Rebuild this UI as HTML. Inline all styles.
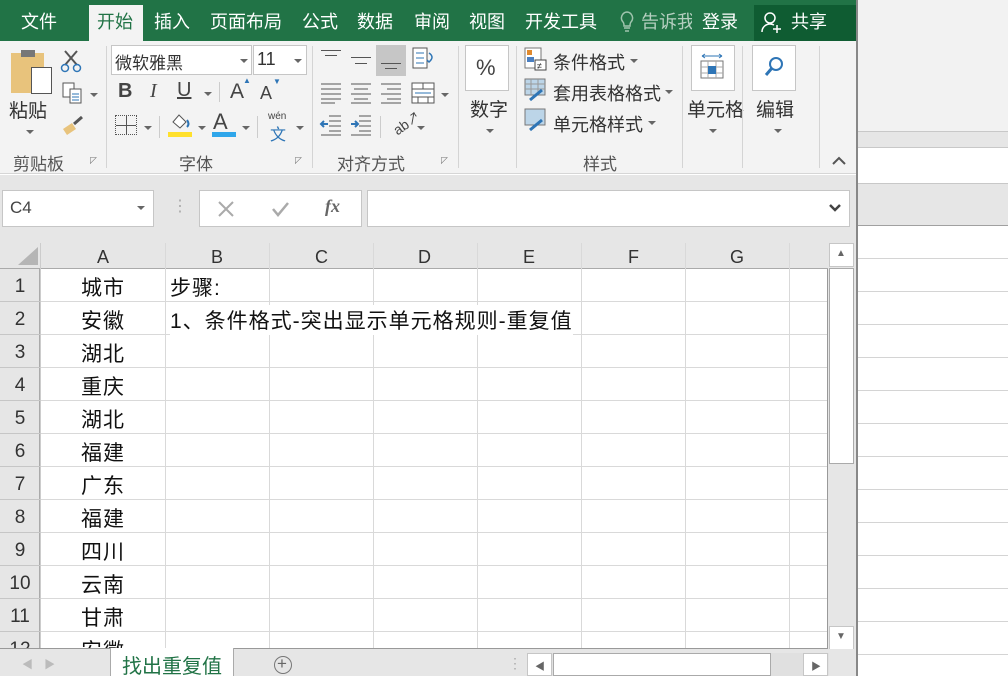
<!DOCTYPE html>
<html><head><meta charset="utf-8"><style>
*{margin:0;padding:0;box-sizing:border-box}
body{width:1008px;height:676px;overflow:hidden;position:relative;background:#fff;font-family:"Liberation Sans","Noto Sans CJK SC",sans-serif;color:#222}
.a{position:absolute}
.t{position:absolute;white-space:nowrap}
.tab{position:absolute;top:8px;font-size:18px;color:#fff}
.rb{font-size:18px;color:#333}
.gl{position:absolute;font-size:17px;color:#555}
.sep{position:absolute;width:1px;background:#d4d4d4}
.dd{position:absolute;width:0;height:0;border-left:4px solid transparent;border-right:4px solid transparent;border-top:4px solid #666}
.hl{position:absolute;height:1px;background:#555}
.cell{position:absolute;font-size:21px;color:#111;letter-spacing:1px}
.rn{position:absolute;left:0;width:40px;text-align:center;font-size:19px;color:#333}
</style></head><body>
<!-- right background window -->
<div class="a" style="left:857px;top:0;width:151px;height:131px;background:#f2f2f2"></div>
<div class="a" style="left:857px;top:131px;width:151px;height:16px;background:#e6e6e6;border-top:1px solid #c8c8c8"></div>
<div class="a" style="left:857px;top:147px;width:151px;height:36px;background:#fff;border-top:1px solid #c8c8c8"></div>
<div class="a" style="left:857px;top:183px;width:151px;height:43px;background:#e6e6e6;border-top:1px solid #c8c8c8;border-bottom:1px solid #a0a0a0"></div>
<div class="a" style="left:857px;top:226px;width:151px;height:450px;background:repeating-linear-gradient(to bottom,#fff 0,#fff 32px,#d4d4d4 32px,#d4d4d4 33px)"></div>
<div class="a" style="left:856px;top:0;width:2px;height:676px;background:#888"></div>

<!-- title/tab bar -->
<div class="a" style="left:0;top:0;width:856px;height:41px;background:#217346"></div>
<div class="a" style="left:754px;top:5px;width:102px;height:36px;background:#0f5c32"></div>
<div class="a" style="left:89px;top:5px;width:54px;height:36px;background:#f3f3f3"></div>
<div class="tab" style="left:21px">文件</div>
<div class="tab" style="left:97px;color:#217346">开始</div>
<div class="tab" style="left:154px">插入</div>
<div class="tab" style="left:210px">页面布局</div>
<div class="tab" style="left:302px">公式</div>
<div class="tab" style="left:357px">数据</div>
<div class="tab" style="left:414px">审阅</div>
<div class="tab" style="left:469px">视图</div>
<div class="tab" style="left:525px">开发工具</div>
<svg class="a" style="left:619px;top:11px" width="16" height="22"><path d="M8 1a6 6 0 0 0-4 10c1 1 1 3 1 4h6c0-1 0-3 1-4A6 6 0 0 0 8 1zM5 17h6M6 20h4" fill="none" stroke="#9fc4ad" stroke-width="1.5"/></svg>
<div class="tab" style="left:641px;color:#b5cfc0">告诉我</div>
<div class="a" style="left:692px;top:5px;width:5px;height:36px;background:#217346"></div>
<div class="tab" style="left:702px">登录</div>
<svg class="a" style="left:760px;top:10px" width="24" height="24" viewBox="0 0 24 24"><circle cx="10" cy="8" r="5" fill="none" stroke="#fff" stroke-width="1.5"/><path d="M2 22c0-5 4-8 8-8 2 0 3 .5 4 1" fill="none" stroke="#fff" stroke-width="1.5"/><path d="M17 15v8M13 19h8" stroke="#fff" stroke-width="1.5"/></svg>
<div class="tab" style="left:791px">共享</div>

<!-- ribbon -->
<div class="a" style="left:0;top:41px;width:856px;height:133px;background:#f3f3f3;border-bottom:1px solid #d6d6d6"></div>
<!-- clipboard -->
<div class="a" style="left:11px;top:53px;width:33px;height:40px;background:#e8c37c"></div>
<div class="a" style="left:21px;top:50px;width:14px;height:7px;background:#777"></div>
<div class="a" style="left:31px;top:67px;width:21px;height:27px;background:#fff;border:1px solid #555"></div>
<div class="t rb" style="left:9px;top:96px;font-size:19px">粘贴</div>
<div class="dd" style="left:26px;top:130px"></div>
<svg class="a" style="left:60px;top:49px" width="22" height="24"><path d="M5 2l12 14M17 2L5 16" stroke="#555" stroke-width="2"/><circle cx="5" cy="19" r="3.5" fill="none" stroke="#2e75b6" stroke-width="1.5"/><circle cx="17" cy="19" r="3.5" fill="none" stroke="#2e75b6" stroke-width="1.5"/></svg>
<svg class="a" style="left:62px;top:82px" width="22" height="24"><rect x="1" y="1" width="11" height="14" fill="#fff" stroke="#555"/><rect x="8" y="7" width="11" height="14" fill="#fff" stroke="#555"/><path d="M10 12h7M10 15h7M10 18h7" stroke="#2e75b6"/></svg>
<div class="dd" style="left:90px;top:93px"></div>
<svg class="a" style="left:60px;top:115px" width="26" height="22"><path d="M3 14l9-6 4 6-9 6z" fill="#e8c37c"/><path d="M14 9l8-7" stroke="#555" stroke-width="3"/></svg>
<div class="gl" style="left:13px;top:150px">剪贴板</div>
<div class="t" style="left:90px;top:155px;font-size:9px;color:#777">◸</div>
<div class="sep" style="left:106px;top:46px;height:122px"></div>
<!-- font -->
<div class="a" style="left:111px;top:45px;width:141px;height:30px;background:#fff;border:1px solid #c6c6c6"></div>
<div class="t" style="left:115px;top:49px;font-size:17px;color:#333">微软雅黑</div>
<div class="dd" style="left:240px;top:59px"></div>
<div class="a" style="left:253px;top:45px;width:54px;height:30px;background:#fff;border:1px solid #c6c6c6"></div>
<div class="t" style="left:257px;top:49px;font-size:18px;color:#333">11</div>
<div class="dd" style="left:294px;top:59px"></div>
<div class="t" style="left:118px;top:80px;font-size:20px;font-weight:bold;color:#444">B</div>
<div class="t" style="left:150px;top:80px;font-size:20px;font-style:italic;font-family:'Liberation Serif',serif;color:#444">I</div>
<div class="t" style="left:177px;top:79px;font-size:20px;text-decoration:underline;color:#444">U</div>
<div class="dd" style="left:204px;top:92px"></div>
<div class="sep" style="left:219px;top:82px;height:20px;background:#ccc"></div>
<div class="t" style="left:230px;top:80px;font-size:21px;color:#444">A</div>
<div class="t" style="left:243px;top:76px;font-size:8px;color:#2e75b6">▲</div>
<div class="t" style="left:260px;top:83px;font-size:18px;color:#444">A</div>
<div class="t" style="left:273px;top:77px;font-size:8px;color:#2e75b6">▼</div>
<div class="a" style="left:115px;top:115px;width:22px;height:20px;border:1px dotted #555;background:linear-gradient(#555,#555) 10px 0/1px 100% no-repeat,linear-gradient(#555,#555) 0 9px/100% 1px no-repeat"></div>
<div class="dd" style="left:144px;top:126px"></div>
<div class="sep" style="left:159px;top:116px;height:22px;background:#ccc"></div>
<svg class="a" style="left:168px;top:112px" width="24" height="20"><path d="M5 10l6-7 7 7-6 6z" fill="#fff" stroke="#555"/><path d="M19 8q3 4 0 7" fill="none" stroke="#2e75b6" stroke-width="2"/></svg>
<div class="a" style="left:168px;top:132px;width:24px;height:5px;background:#ffe02c"></div>
<div class="dd" style="left:198px;top:126px"></div>
<div class="t" style="left:213px;top:109px;font-size:22px;color:#444">A</div>
<div class="a" style="left:212px;top:132px;width:24px;height:5px;background:#2fa6ea"></div>
<div class="dd" style="left:242px;top:126px"></div>
<div class="sep" style="left:257px;top:116px;height:22px;background:#ccc"></div>
<div class="t" style="left:268px;top:111px;font-size:10px;color:#444">wén</div>
<div class="t" style="left:270px;top:121px;font-size:16px;color:#2e75b6">文</div>
<div class="dd" style="left:296px;top:126px"></div>
<div class="gl" style="left:179px;top:150px">字体</div>
<div class="t" style="left:295px;top:155px;font-size:9px;color:#777">◸</div>
<div class="sep" style="left:312px;top:46px;height:122px"></div>
<!-- alignment -->
<div class="a" style="left:376px;top:45px;width:30px;height:31px;background:#c6c6c6"></div>
<div class="hl" style="left:321px;top:50px;width:20px"></div><div class="hl" style="left:325px;top:55px;width:12px"></div>
<div class="hl" style="left:351px;top:57px;width:20px"></div><div class="hl" style="left:355px;top:63px;width:12px"></div>
<div class="hl" style="left:381px;top:63px;width:20px"></div><div class="hl" style="left:385px;top:68px;width:12px"></div>
<svg class="a" style="left:412px;top:47px" width="24" height="24"><rect x="1" y="1" width="14" height="20" fill="#fff" stroke="#555"/><path d="M4 6h8M4 11h8M4 16h8" stroke="#2e75b6"/><path d="M17 6q6 4 0 9l-2-2" fill="none" stroke="#2e75b6" stroke-width="1.5"/></svg>
<svg class="a" style="left:319px;top:82px" width="130" height="22"><g stroke="#555"><path d="M2 2h20M2 7h20M2 12h20M2 17h20M2 21h14"/><path d="M32 2h20M35 7h14M32 12h20M35 17h14M32 21h20"/><path d="M62 2h20M68 7h14M62 12h20M68 17h14M62 21h20"/></g><rect x="93" y="1" width="22" height="20" fill="#fff" stroke="#555"/><path d="M93 7h22M93 15h22M104 1v6M99 15v6M109 15v6" stroke="#555"/><path d="M96 11h16" stroke="#2e75b6"/></svg>
<div class="dd" style="left:441px;top:93px"></div>
<svg class="a" style="left:319px;top:114px" width="60" height="22"><g stroke="#555"><path d="M10 2h12M10 7h12M10 12h12M10 17h12M2 21h20"/><path d="M40 2h12M40 7h12M40 12h12M40 17h12M32 21h20"/></g><path d="M2 10h7M5 7l-3 3 3 3" stroke="#2e75b6" fill="none" stroke-width="2"/><path d="M32 10h7M36 7l3 3-3 3" stroke="#2e75b6" fill="none" stroke-width="2"/></svg>
<div class="sep" style="left:380px;top:116px;height:22px;background:#ccc"></div>
<div class="t" style="left:392px;top:113px;font-size:14px;color:#444;transform:rotate(-35deg)">ab↗</div>
<div class="dd" style="left:417px;top:126px"></div>
<div class="gl" style="left:337px;top:150px">对齐方式</div>
<div class="t" style="left:441px;top:155px;font-size:9px;color:#777">◸</div>
<div class="sep" style="left:458px;top:46px;height:122px"></div>
<!-- number -->
<div class="a" style="left:465px;top:45px;width:44px;height:46px;background:#fff;border:1px solid #c6c6c6"></div>
<div class="t" style="left:476px;top:55px;font-size:22px;color:#444">%</div>
<div class="t rb" style="left:470px;top:95px;font-size:19px">数字</div>
<div class="dd" style="left:486px;top:129px"></div>
<div class="sep" style="left:516px;top:46px;height:122px"></div>
<!-- styles -->
<svg class="a" style="left:524px;top:47px" width="24" height="24"><rect x="1" y="1" width="16" height="20" fill="#fff" stroke="#777"/><rect x="3" y="3" width="5" height="5" fill="#e08a2e"/><rect x="3" y="10" width="7" height="5" fill="#4a7fc1"/><rect x="11" y="13" width="11" height="10" fill="#fff" stroke="#444"/><text x="13" y="22" font-size="9" fill="#222">≠</text></svg>
<div class="t rb" style="left:553px;top:49px">条件格式</div><div class="dd" style="left:630px;top:59px"></div>
<svg class="a" style="left:524px;top:78px" width="24" height="24"><rect x="1" y="1" width="20" height="16" fill="#bcd5e8" stroke="#777"/><path d="M1 6h20M1 11h20M7 1v16M14 1v16" stroke="#999"/><path d="M6 22l12-10" stroke="#2e75b6" stroke-width="3"/></svg>
<div class="t rb" style="left:553px;top:80px">套用表格格式</div><div class="dd" style="left:665px;top:90px"></div>
<svg class="a" style="left:524px;top:108px" width="24" height="24"><rect x="1" y="1" width="20" height="16" fill="#bcd5e8" stroke="#777"/><path d="M6 22l12-10" stroke="#2e75b6" stroke-width="3"/></svg>
<div class="t rb" style="left:553px;top:111px">单元格样式</div><div class="dd" style="left:648px;top:121px"></div>
<div class="gl" style="left:583px;top:150px">样式</div>
<div class="sep" style="left:682px;top:46px;height:122px"></div>
<div class="a" style="left:691px;top:45px;width:44px;height:46px;background:#fff;border:1px solid #c6c6c6"></div>
<svg class="a" style="left:700px;top:52px" width="26" height="30"><path d="M2 4h20M2 4l3-2M2 4l3 2M22 4l-3-2M22 4l-3 2" stroke="#2e75b6" fill="none"/><rect x="1" y="9" width="22" height="17" fill="#fff" stroke="#777"/><path d="M1 15h22M1 21h22M8 9v17M16 9v17" stroke="#aaa"/><rect x="8" y="14" width="8" height="8" fill="#2e75b6"/></svg>
<div class="t rb" style="left:687px;top:95px;font-size:19px">单元格</div>
<div class="dd" style="left:709px;top:129px"></div>
<div class="sep" style="left:742px;top:46px;height:122px"></div>
<div class="a" style="left:752px;top:45px;width:44px;height:46px;background:#fff;border:1px solid #c6c6c6"></div>
<svg class="a" style="left:762px;top:55px" width="24" height="24"><circle cx="14" cy="9" r="6" fill="none" stroke="#2e75b6" stroke-width="2"/><path d="M10 13l-6 7" stroke="#2e75b6" stroke-width="3"/></svg>
<div class="t rb" style="left:756px;top:95px;font-size:19px">编辑</div>
<div class="dd" style="left:774px;top:129px"></div>
<div class="sep" style="left:819px;top:46px;height:122px"></div>
<svg class="a" style="left:831px;top:156px" width="16" height="10"><path d="M2 8l6-6 6 6" fill="none" stroke="#555" stroke-width="2"/></svg>

<!-- formula bar -->
<div class="a" style="left:0;top:175px;width:856px;height:68px;background:#e6e6e6"></div>
<div class="a" style="left:2px;top:190px;width:152px;height:37px;background:#fff;border:1px solid #c6c6c6"></div>
<div class="t" style="left:10px;top:198px;font-size:17px;color:#444">C4</div>
<div class="dd" style="left:137px;top:206px"></div>
<div class="t" style="left:172px;top:196px;font-size:16px;color:#aaa">⋮</div>
<div class="a" style="left:199px;top:190px;width:163px;height:37px;background:#fff;border:1px solid #c6c6c6"></div>
<svg class="a" style="left:215px;top:198px" width="130" height="22"><path d="M4 4l14 14M18 4L4 18" stroke="#aaa" stroke-width="2"/><path d="M58 11l5 6 10-12" fill="none" stroke="#aaa" stroke-width="2.5"/></svg>
<div class="t" style="left:325px;top:196px;font-size:18px;font-style:italic;font-weight:bold;font-family:'Liberation Serif',serif;color:#666">fx</div>
<div class="a" style="left:367px;top:190px;width:483px;height:37px;background:#fff;border:1px solid #c6c6c6"></div>
<svg class="a" style="left:828px;top:203px" width="14" height="10"><path d="M2 2l5 5 5-5" fill="none" stroke="#444" stroke-width="2.5"/></svg>

<!-- grid -->
<div class="a" style="left:0;top:243px;width:829px;height:26px;background:#e6e6e6;border-bottom:1px solid #aaa"></div>
<svg class="a" style="left:16px;top:245px" width="24" height="22"><path d="M22 2v18H2z" fill="#b5b5b5"/></svg>
<div class="a" style="left:0;top:269px;width:40px;height:379px;background:#e6e6e6;border-right:1px solid #aaa"></div>
<div class="a" style="left:40px;top:269px;width:788px;height:379px;background:#fff;
background-image:repeating-linear-gradient(to bottom,transparent 0,transparent 32px,#d9d9d9 32px,#d9d9d9 33px);"></div>
<div class="a" style="left:827px;top:269px;width:1px;height:380px;background:#999"></div>
<div class="a" style="left:0;top:648px;width:829px;height:1px;background:#999"></div>
<div class="a" style="left:40px;top:243px;width:1px;height:405px;background:#ccc"></div>
<div class="a" style="left:165px;top:243px;width:1px;height:405px;background:#d9d9d9"></div>
<div class="a" style="left:269px;top:243px;width:1px;height:405px;background:#d9d9d9"></div>
<div class="a" style="left:373px;top:243px;width:1px;height:405px;background:#d9d9d9"></div>
<div class="a" style="left:477px;top:243px;width:1px;height:405px;background:#d9d9d9"></div>
<div class="a" style="left:581px;top:243px;width:1px;height:405px;background:#d9d9d9"></div>
<div class="a" style="left:685px;top:243px;width:1px;height:405px;background:#d9d9d9"></div>
<div class="a" style="left:789px;top:243px;width:1px;height:405px;background:#d9d9d9"></div>
<div class="t" style="left:97px;top:247px;font-size:18px;color:#333">A</div>
<div class="t" style="left:211px;top:247px;font-size:18px;color:#333">B</div>
<div class="t" style="left:315px;top:247px;font-size:18px;color:#333">C</div>
<div class="t" style="left:418px;top:247px;font-size:18px;color:#333">D</div>
<div class="t" style="left:523px;top:247px;font-size:18px;color:#333">E</div>
<div class="t" style="left:628px;top:247px;font-size:18px;color:#333">F</div>
<div class="t" style="left:730px;top:247px;font-size:18px;color:#333">G</div>
<div class="a" style="left:0;top:269px;width:40px;height:379px;background:repeating-linear-gradient(to bottom,transparent 0,transparent 32px,#c6c6c6 32px,#c6c6c6 33px)"></div>
<div class="rn" style="top:276px">1</div><div class="rn" style="top:309px">2</div><div class="rn" style="top:342px">3</div><div class="rn" style="top:375px">4</div><div class="rn" style="top:408px">5</div><div class="rn" style="top:441px">6</div><div class="rn" style="top:474px">7</div><div class="rn" style="top:507px">8</div><div class="rn" style="top:540px">9</div><div class="rn" style="top:573px">10</div><div class="rn" style="top:606px">11</div><div class="rn" style="top:639px;height:9px;overflow:hidden">12</div>
<div class="cell" style="left:81px;top:272px">城市</div>
<div class="cell" style="left:81px;top:305px">安徽</div>
<div class="cell" style="left:81px;top:338px">湖北</div>
<div class="cell" style="left:81px;top:371px">重庆</div>
<div class="cell" style="left:81px;top:404px">湖北</div>
<div class="cell" style="left:81px;top:437px">福建</div>
<div class="cell" style="left:81px;top:470px">广东</div>
<div class="cell" style="left:81px;top:503px">福建</div>
<div class="cell" style="left:81px;top:536px">四川</div>
<div class="cell" style="left:81px;top:569px">云南</div>
<div class="cell" style="left:81px;top:602px">甘肃</div>
<div class="cell" style="left:81px;top:635px;height:13px;overflow:hidden">安徽</div>
<div class="cell" style="left:170px;top:272px">步骤:</div>
<div class="cell" style="left:170px;top:305px;background:#fff">1、条件格式-突出显示单元格规则-重复值</div>

<!-- vertical scrollbar -->
<div class="a" style="left:828px;top:243px;width:28px;height:406px;background:#e6e6e6"></div>
<div class="a" style="left:829px;top:243px;width:25px;height:24px;background:#fff;border:1px solid #c6c6c6"></div>
<div class="t" style="left:836px;top:248px;font-size:10px;color:#666">▲</div>
<div class="a" style="left:829px;top:268px;width:25px;height:196px;background:#fff;border:1px solid #aaa"></div>
<div class="a" style="left:829px;top:626px;width:25px;height:24px;background:#fff;border:1px solid #c6c6c6"></div>
<div class="t" style="left:836px;top:631px;font-size:10px;color:#666">▼</div>

<!-- sheet tab bar -->
<div class="a" style="left:0;top:649px;width:856px;height:27px;background:#e6e6e6"></div>
<div class="t" style="left:22px;top:656px;font-size:11px;color:#bbb">◀</div>
<div class="t" style="left:38px;top:656px;font-size:11px;color:#bbb">&nbsp;&nbsp;▶</div>
<div class="a" style="left:110px;top:648px;width:124px;height:28px;background:#fff;border-left:1px solid #aaa;border-right:1px solid #aaa"></div>
<div class="t" style="left:122px;top:650px;font-size:20px;color:#217346">找出重复值</div>
<div class="a" style="left:274px;top:656px;width:18px;height:18px;border:1px solid #777;border-radius:50%"></div>
<div class="t" style="left:277px;top:654px;font-size:17px;color:#666">+</div>
<div class="t" style="left:508px;top:655px;font-size:14px;color:#aaa">⋮</div>
<div class="a" style="left:527px;top:653px;width:302px;height:23px;background:#e0e0e0"></div>
<div class="a" style="left:527px;top:653px;width:25px;height:23px;background:#fff;border:1px solid #c6c6c6"></div>
<div class="t" style="left:535px;top:658px;font-size:10px;color:#666">◀</div>
<div class="a" style="left:553px;top:653px;width:218px;height:23px;background:#fff;border:1px solid #aaa"></div>
<div class="a" style="left:803px;top:653px;width:25px;height:23px;background:#fff;border:1px solid #c6c6c6"></div>
<div class="t" style="left:811px;top:658px;font-size:10px;color:#666">▶</div>
</body></html>
